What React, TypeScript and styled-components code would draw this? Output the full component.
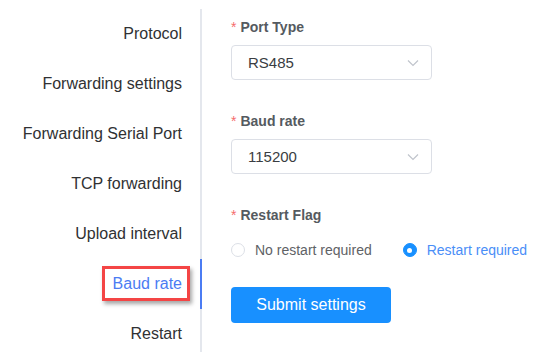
import React from "react";
import styled, { createGlobalStyle, css } from "styled-components";

const Global = createGlobalStyle`
  html, body { margin: 0; padding: 0; background: #fff; }
  body { font-family: "Liberation Sans", Arial, sans-serif; }
`;

const Page = styled.div`
  display: flex;
  align-items: flex-start;
  width: 555px;
  height: 352px;
  overflow: hidden;
  background: #fff;
`;

const Nav = styled.nav`
  flex-shrink: 0;
  width: 200px;
  margin-top: 9px;
  border-right: 2px solid #e4e7ed;
  display: flex;
  flex-direction: column;
`;

const NavItem = styled.div<{ $active?: boolean }>`
  flex-shrink: 0;
  height: 50px;
  display: flex;
  align-items: center;
  justify-content: flex-end;
  padding-right: 18px;
  font-size: 16px;
  color: #303133;
  margin-right: -2px;
  border-right: 2px solid transparent;
  ${(p) =>
    p.$active &&
    css`
      color: #4b7cf3;
      border-right-color: #4b7cf3;
    `}
`;

const Highlight = styled.span`
  position: relative;
  &::after {
    content: "";
    position: absolute;
    top: -9px;
    bottom: -8px;
    left: -11px;
    right: -8px;
    border: 3px solid #f44545;
    box-shadow: 2px 3px 4px rgba(0, 0, 0, 0.35);
  }
`;

const Form = styled.div`
  padding: 17px 0 0 29px;
  display: flex;
  flex-direction: column;
`;

const Item = styled.div`
  display: flex;
  flex-direction: column;
  margin-bottom: 31px;
`;

const Label = styled.div`
  height: 20px;
  line-height: 20px;
  font-size: 14px;
  font-weight: bold;
  color: #555a60;
  margin-bottom: 8px;
`;

const Star = styled.span`
  color: #f56c6c;
  font-weight: normal;
  margin-right: 4px;
`;

const Select = styled.div`
  box-sizing: border-box;
  width: 201px;
  height: 35px;
  border: 1px solid #dcdfe6;
  border-radius: 4px;
  display: flex;
  align-items: center;
  justify-content: space-between;
  padding: 0 12px 0 16px;
  font-size: 15px;
  color: #3a3d42;
`;

const RadioRow = styled.div`
  height: 34px;
  margin-top: 1px;
  display: flex;
  align-items: center;
  gap: 31px;
`;

const Radio = styled.label<{ $checked?: boolean }>`
  display: flex;
  align-items: center;
  gap: 10px;
  font-size: 14px;
  color: ${(p) => (p.$checked ? "#4a8ef7" : "#606266")};
`;

const Circle = styled.span<{ $checked?: boolean }>`
  box-sizing: border-box;
  width: 14px;
  height: 14px;
  border-radius: 50%;
  border: 1px solid ${(p) => (p.$checked ? "#1890ff" : "#dcdfe6")};
  background: ${(p) => (p.$checked ? "#1890ff" : "#fff")};
  display: flex;
  align-items: center;
  justify-content: center;
  &::after {
    content: "";
    width: 5px;
    height: 5px;
    border-radius: 50%;
    background: #fff;
    display: ${(p) => (p.$checked ? "block" : "none")};
  }
`;

const Button = styled.button`
  width: 160px;
  height: 36px;
  margin-top: 20px;
  border: none;
  border-radius: 4px;
  background: #1890ff;
  color: #fff;
  font-family: "Liberation Sans", Arial, sans-serif;
  font-size: 16px;
  cursor: pointer;
`;

const Chevron = () => (
  <svg width="12" height="8" viewBox="0 0 12 8">
    <path d="M1 1.5 L6 6.5 L11 1.5" fill="none" stroke="#c0c4cc" strokeWidth="1.2" />
  </svg>
);

const navItems = [
  "Protocol",
  "Forwarding settings",
  "Forwarding Serial Port",
  "TCP forwarding",
  "Upload interval",
  "Baud rate",
  "Restart",
];

export default function App() {
  return (
    <>
      <Global />
      <Page>
        <Nav>
          {navItems.map((n) =>
            n === "Baud rate" ? (
              <NavItem key={n} $active>
                <Highlight>{n}</Highlight>
              </NavItem>
            ) : (
              <NavItem key={n}>{n}</NavItem>
            )
          )}
        </Nav>
        <Form>
          <Item>
            <Label>
              <Star>*</Star>Port Type
            </Label>
            <Select>
              RS485
              <Chevron />
            </Select>
          </Item>
          <Item>
            <Label>
              <Star>*</Star>Baud rate
            </Label>
            <Select>
              115200
              <Chevron />
            </Select>
          </Item>
          <div>
            <Label>
              <Star>*</Star>Restart Flag
            </Label>
            <RadioRow>
              <Radio>
                <Circle />
                No restart required
              </Radio>
              <Radio $checked>
                <Circle $checked />
                Restart required
              </Radio>
            </RadioRow>
          </div>
          <Button>Submit settings</Button>
        </Form>
      </Page>
    </>
  );
}
